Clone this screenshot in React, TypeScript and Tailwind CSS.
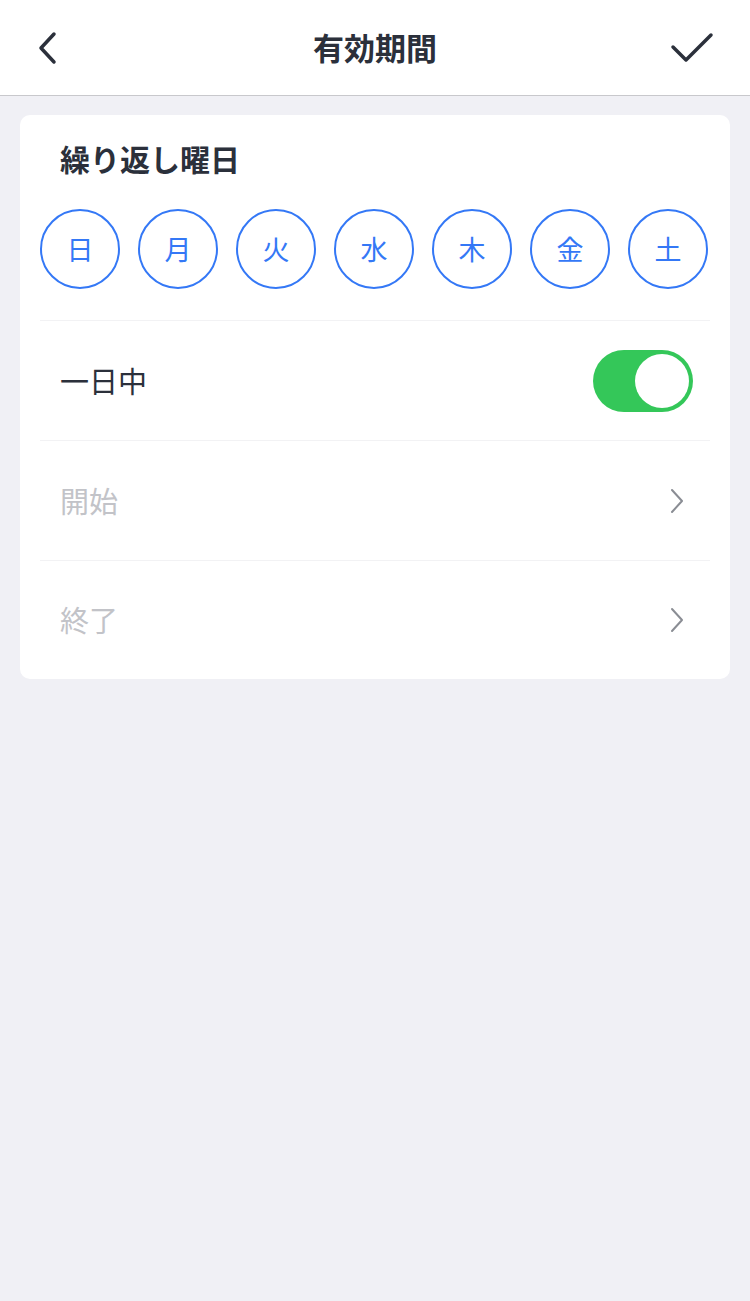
import { useState } from "react";

const days = ["日", "月", "火", "水", "木", "金", "土"];

const font = { fontFamily: '"Noto Sans CJK JP", "Noto Sans", sans-serif' };

function Chevron() {
  return (
    <svg width="14" height="26" viewBox="0 0 14 26" fill="none">
      <path d="M2 2l10 11L2 24" stroke="#8a8d94" strokeWidth="2" strokeLinecap="round" strokeLinejoin="round" />
    </svg>
  );
}

export default function App() {
  const [allDay, setAllDay] = useState(true);

  return (
    <div className="min-h-[1301px] w-[750px] bg-[#f0f0f5]" style={font}>
      <div className="h-[96px] bg-white border-b border-[#c8c8cc] grid grid-cols-[1fr_auto_1fr] items-center pl-[36px] pr-[36px]">
        <svg width="22" height="34" viewBox="0 0 22 34" fill="none">
          <path d="M18 3L5 17l13 14" stroke="#2b303b" strokeWidth="3.5" strokeLinecap="round" strokeLinejoin="round" />
        </svg>
        <h1 className="text-[31px] font-bold text-[#2b303b]">有効期間</h1>
        <div className="flex justify-end">
          <svg width="44" height="32" viewBox="0 0 44 32" fill="none">
            <path d="M3 15l13 13L41 3" stroke="#2b303b" strokeWidth="3.5" strokeLinecap="round" strokeLinejoin="round" />
          </svg>
        </div>
      </div>

      <div className="mx-[20px] mt-[19px] bg-white rounded-[10px] px-[20px]">
        <div className="pt-[23px] pb-[31px] border-b border-[#f2f2f4]">
          <h2 className="px-[20px] text-[30px] font-bold text-[#2b303b] leading-[40px]">繰り返し曜日</h2>
          <div className="mt-[31px] flex justify-between pr-[2px]">
            {days.map((d) => (
              <button
                key={d}
                className="w-[80px] h-[80px] rounded-full border-2 border-[#3478f6] text-[#3478f6] text-[27px] flex items-center justify-center"
              >
                {d}
              </button>
            ))}
          </div>
        </div>

        <div className="h-[120px] flex items-center justify-between pl-[20px] pr-[17px] border-b border-[#f2f2f4]">
          <span className="text-[29px] text-[#2b303b]">一日中</span>
          <button
            onClick={() => setAllDay((v) => !v)}
            className={`w-[100px] h-[62px] rounded-full p-[4px] flex items-center ${allDay ? "bg-[#34c759] justify-end" : "bg-[#e5e5ea] justify-start"}`}
          >
            <span className="w-[54px] h-[54px] rounded-full bg-white block" />
          </button>
        </div>

        <div className="h-[120px] flex items-center justify-between pl-[20px] pr-[26px] border-b border-[#f2f2f4]">
          <span className="text-[29px] text-[#c2c3c8]">開始</span>
          <Chevron />
        </div>

        <div className="h-[118px] flex items-center justify-between pl-[20px] pr-[26px]">
          <span className="text-[29px] text-[#c2c3c8]">終了</span>
          <Chevron />
        </div>
      </div>
    </div>
  );
}
